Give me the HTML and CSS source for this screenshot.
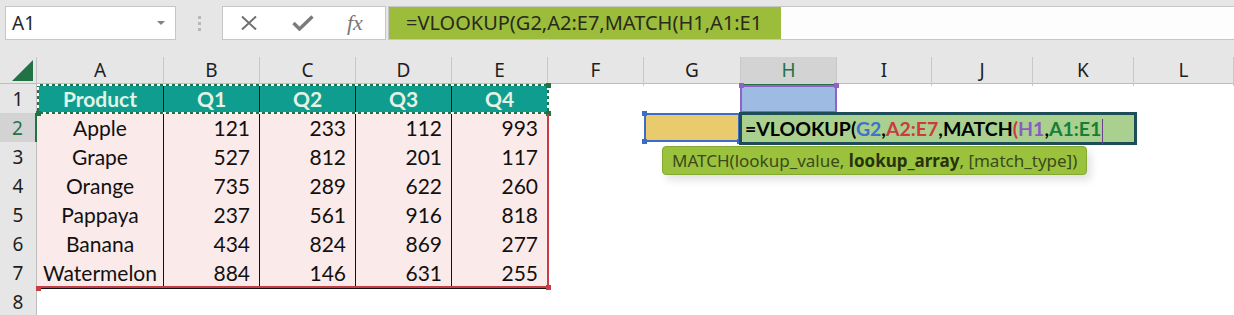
FILE: index.html
```html
<!DOCTYPE html>
<html lang="en">
<head>
  <meta charset="UTF-8" />
  <title>VLOOKUP MATCH</title>
  <link rel="stylesheet" href="styles.css">
</head>
<body>
  <div class="topbar">
    <div class="namebox">
      <span>A1</span>
      <span class="caret"></span>
    </div>
    <div class="grip"><i></i><i></i><i></i></div>
    <div class="fbuttons">
      <svg class="ico" width="18" height="14" viewBox="0 0 18 14">
        <path d="M2 0.5 L16 13.5 M16 0.5 L2 13.5" stroke="#6f6f6f" stroke-width="2" fill="none"/>
      </svg>
      <svg class="ico" width="22" height="16" viewBox="0 0 22 16">
        <path d="M1.5 8 L7.5 14 L20.5 1.5" stroke="#7b7b7b" stroke-width="3.4" fill="none"/>
      </svg>
      <span class="fx">fx</span>
    </div>
    <div class="fbar">
      <div class="fbar-text">=VLOOKUP(G2,A2:E7,MATCH(H1,A1:E1</div>
    </div>
  </div>

  <div class="sheet">
    <div class="row colheads">
      <div class="corner">
        <svg width="21" height="21" viewBox="0 0 21 21"><path d="M21 0 L21 21 L0 21 Z" fill="#217346"/></svg>
      </div>
      <div class="ch">A</div><div class="ch">B</div><div class="ch">C</div><div class="ch">D</div>
      <div class="ch">E</div><div class="ch">F</div><div class="ch">G</div><div class="ch sel">H</div>
      <div class="ch">I</div><div class="ch">J</div><div class="ch">K</div><div class="ch">L</div>
    </div>

    <div class="row">
      <div class="rh">1</div>
      <div class="cell head">Product</div><div class="cell head">Q1</div><div class="cell head">Q2</div>
      <div class="cell head">Q3</div><div class="cell head">Q4</div>
    </div>
    <div class="row">
      <div class="rh sel">2</div>
      <div class="cell name">Apple</div><div class="cell">121</div><div class="cell">233</div>
      <div class="cell">112</div><div class="cell">993</div>
    </div>
    <div class="row">
      <div class="rh">3</div>
      <div class="cell name">Grape</div><div class="cell">527</div><div class="cell">812</div>
      <div class="cell">201</div><div class="cell">117</div>
    </div>
    <div class="row">
      <div class="rh">4</div>
      <div class="cell name">Orange</div><div class="cell">735</div><div class="cell">289</div>
      <div class="cell">622</div><div class="cell">260</div>
    </div>
    <div class="row">
      <div class="rh">5</div>
      <div class="cell name">Pappaya</div><div class="cell">237</div><div class="cell">561</div>
      <div class="cell">916</div><div class="cell">818</div>
    </div>
    <div class="row">
      <div class="rh">6</div>
      <div class="cell name">Banana</div><div class="cell">434</div><div class="cell">824</div>
      <div class="cell">869</div><div class="cell">277</div>
    </div>
    <div class="row">
      <div class="rh">7</div>
      <div class="cell name">Watermelon</div><div class="cell">884</div><div class="cell">146</div>
      <div class="cell">631</div><div class="cell">255</div>
    </div>
    <div class="row">
      <div class="rh">8</div>
    </div>

    <!-- range highlights drawn over the grid -->
    <div class="ants"></div>
    <div class="handle green" style="left:546px;top:26px"></div>
    <div class="handle green" style="left:546px;top:54px"></div>
    <div class="handle green" style="left:36px;top:54px"></div>

    <div class="range-red"></div>
    <div class="handle red" style="left:546px;top:228px"></div>
    <div class="handle red" style="left:36px;top:229px"></div>

    <div class="range-h1"></div>
    <div class="handle purple" style="left:739px;top:26px"></div>
    <div class="handle purple" style="left:834px;top:26px"></div>

    <div class="range-g2"></div>
    <div class="handle blue" style="left:642px;top:54px"></div>
    <div class="handle blue" style="left:642px;top:82px"></div>
    <div class="handle blue" style="left:737px;top:82px"></div>

    <div class="editor">
      <span>=VLOOKUP(</span><span class="r-blue">G2</span><span>,</span><span class="r-red">A2:E7</span><span>,MATCH</span><span class="r-red">(</span><span class="r-purple">H1</span><span>,</span><span class="r-green">A1:E1</span><span class="cursor"></span>
    </div>

    <div class="tip">MATCH(lookup_value, <b>lookup_array</b>, [match_type])</div>
  </div>
</body>
</html>
```

FILE: styles.css
```css
* {
  box-sizing: border-box;
  margin: 0;
  padding: 0;
}

body {
  width: 1234px;
  height: 315px;
  overflow: hidden;
  background: #fff;
  font-family: 'Noto Sans', sans-serif;
  color: #222;
}

/* ---------- formula bar ---------- */

.topbar {
  height: 57px;
  background: #e6e6e6;
  display: flex;
  align-items: flex-start;
  padding: 6px 0 0 5px;
}

.namebox {
  width: 171px;
  height: 34px;
  background: #fff;
  border: 1px solid #c6c6c6;
  display: flex;
  align-items: center;
  justify-content: space-between;
  padding: 0 10px 0 6px;
  font-size: 19px;
  color: #262626;
}

.caret {
  width: 0;
  height: 0;
  border-left: 4px solid transparent;
  border-right: 4px solid transparent;
  border-top: 4px solid #808080;
}

.grip {
  width: 46px;
  height: 34px;
  display: flex;
  flex-direction: column;
  align-items: center;
  justify-content: center;
  gap: 3px;
}

.grip i {
  width: 3px;
  height: 3px;
  background: #b8b8b8;
}

.fbuttons {
  width: 164px;
  height: 34px;
  background: #fff;
  border: 1px solid #c6c6c6;
  display: flex;
  align-items: center;
  padding-left: 17px;
  gap: 34px;
}

.fx {
  font-family: 'Liberation Serif', serif;
  font-style: italic;
  font-size: 22px;
  color: #777;
  margin-left: -1px;
}

.fbar {
  flex: 1;
  height: 34px;
  margin-left: 2px;
  background: #fdfdfd;
  border: 1px solid #c6c6c6;
  border-right: none;
}

.fbar-text {
  width: 392px;
  height: 100%;
  background: #9bbd3b;
  padding-left: 17px;
  font-size: 20px;
  line-height: 32px;
  color: #2a2a1c;
}

/* ---------- grid ---------- */

.sheet {
  position: relative;
}

.row {
  display: grid;
  grid-template-columns: 37px 127px 96px 96px 96px 96px 96px 97px 96px 95px 101px 101px 100px;
  height: 29px;
}

.colheads {
  height: 27px;
  background: #e6e6e6;
  border-bottom: 1px solid #bdbdbd;
}

.corner {
  border-right: 1px solid #c4c4c4;
  display: flex;
  align-items: flex-start;
  justify-content: flex-end;
  padding: 3px 3px 0 0;
}

.ch {
  border-right: 1px solid #c8c8c8;
  text-align: center;
  font-size: 19px;
  line-height: 27px;
  color: #1e1e1e;
}

.ch.sel {
  background: #d3d3d3;
  color: #217346;
  border-bottom: 2px solid #217346;
}

.rh {
  background: #e6e6e6;
  border-right: 1px solid #bdbdbd;
  border-bottom: 1px solid #d6d6d6;
  text-align: center;
  font-size: 19px;
  line-height: 29px;
  padding-top: 1px;
  color: #1e1e1e;
}

.rh.sel {
  background: #d3d3d3;
  color: #217346;
  border-right: 2px solid #217346;
}

.cell {
  background: #fbeaea;
  border-right: 1px solid #111;
  border-bottom: 1px solid #111;
  font-family: 'Lato', sans-serif;
  font-size: 21px;
  line-height: 29px;
  padding: 0 9px 0 0;
  text-align: right;
  color: #111;
}

.cell.name {
  text-align: center;
  padding: 0;
}

.cell.head {
  background: #0f9d8f;
  color: #e3f3e4;
  font-weight: bold;
  text-align: center;
  padding: 0;
}

/* ---------- range highlights ---------- */

.ants {
  position: absolute;
  left: 37px;
  top: 27px;
  width: 512px;
  height: 30px;
  background:
    repeating-linear-gradient(90deg, #fff 0 3px, #217346 3px 6px) top / 100% 2px no-repeat,
    repeating-linear-gradient(90deg, #fff 0 3px, #217346 3px 6px) bottom / 100% 2px no-repeat,
    repeating-linear-gradient(0deg, #fff 0 3px, #217346 3px 6px) left / 2px 100% no-repeat,
    repeating-linear-gradient(0deg, #fff 0 3px, #217346 3px 6px) right / 2px 100% no-repeat;
}

.range-red {
  position: absolute;
  left: 37px;
  top: 57px;
  width: 512px;
  height: 174px;
  border-right: 2px solid #c63d46;
  border-bottom: 2px solid #c63d46;
}

.range-h1 {
  position: absolute;
  left: 740px;
  top: 28px;
  width: 97px;
  height: 28px;
  background: #9dbbe3;
  border: 2px solid #8e62c6;
}

.range-g2 {
  position: absolute;
  left: 644px;
  top: 56px;
  width: 96px;
  height: 29px;
  background: #e9cb6d;
  border: 2px solid #3b6dc5;
}

.handle {
  position: absolute;
  width: 5px;
  height: 5px;
}

.handle.green { background: #217346; }
.handle.red { background: #c63d46; }
.handle.purple { background: #8e62c6; }
.handle.blue { background: #3b6dc5; }

.editor {
  position: absolute;
  left: 739px;
  top: 55px;
  width: 398px;
  height: 33px;
  background: #a9d08e;
  border: 3px solid #1d4e57;
  padding-left: 3px;
  font-family: 'Lato', sans-serif;
  font-weight: bold;
  font-size: 19.5px;
  line-height: 27px;
  color: #000;
  white-space: nowrap;
}

.r-blue { color: #3f72c8; }
.r-red { color: #cc3a44; }
.r-purple { color: #8a5cc2; }
.r-green { color: #13803a; }

.cursor {
  display: inline-block;
  width: 1px;
  height: 25px;
  margin-left: 1px;
  vertical-align: middle;
  background: #6a3f8e;
}

.tip {
  position: absolute;
  left: 662px;
  top: 89px;
  width: 425px;
  height: 29px;
  background: #9bc23c;
  border: 1px solid #84a830;
  border-radius: 4px;
  box-shadow: 4px 5px 8px rgba(0, 0, 0, 0.12);
  padding-left: 9px;
  font-size: 17px;
  line-height: 27px;
  color: #3a4a1e;
  white-space: nowrap;
}

.tip b {
  color: #27320f;
}
```
